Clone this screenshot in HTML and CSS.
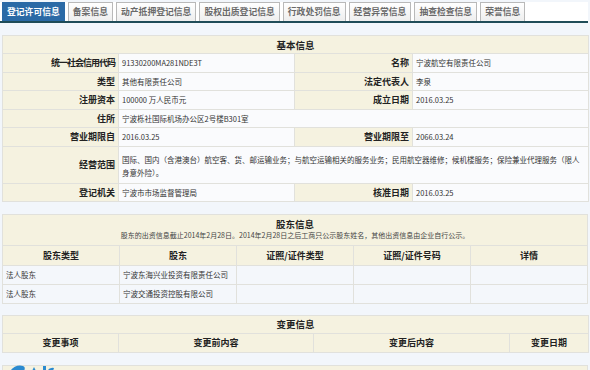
FILE: index.html
```html
<!DOCTYPE html>
<html lang="zh-CN">
<head>
    <meta charset="UTF-8">
    <title>企业信息公示</title>
    <link rel="stylesheet" href="styles.css">
</head>
<body>
    <div class="page">
        <ul class="tabs">
            <li class="tab active">登记许可信息</li>
            <li class="tab">备案信息</li>
            <li class="tab">动产抵押登记信息</li>
            <li class="tab">股权出质登记信息</li>
            <li class="tab">行政处罚信息</li>
            <li class="tab">经营异常信息</li>
            <li class="tab">抽查检查信息</li>
            <li class="tab">荣誉信息</li>
        </ul>

        <!-- 基本信息 -->
        <table class="grid">
            <colgroup>
                <col class="w-label"><col class="w-value"><col class="w-label2"><col class="w-value">
            </colgroup>
            <tr><th colspan="4" class="caption">基本信息</th></tr>
            <tr>
                <td class="label tight">统一社会信用代码</td><td class="value">91330200MA281NDE3T</td>
                <td class="label">名称</td><td class="value">宁波航空有限责任公司</td>
            </tr>
            <tr>
                <td class="label">类型</td><td class="value">其他有限责任公司</td>
                <td class="label">法定代表人</td><td class="value">李泉</td>
            </tr>
            <tr>
                <td class="label">注册资本</td><td class="value">100000 万人民币元</td>
                <td class="label">成立日期</td><td class="value">2016.03.25</td>
            </tr>
            <tr>
                <td class="label">住所</td><td class="value" colspan="3">宁波栎社国际机场办公区2号楼B301室</td>
            </tr>
            <tr>
                <td class="label">营业期限自</td><td class="value">2016.03.25</td>
                <td class="label">营业期限至</td><td class="value">2066.03.24</td>
            </tr>
            <tr>
                <td class="label">经营范围</td>
                <td class="value wrap" colspan="3">国际、国内（含港澳台）航空客、货、邮运输业务；与航空运输相关的服务业务；民用航空器维修；候机楼服务；保险兼业代理服务（限人<br>身意外险）。</td>
            </tr>
            <tr>
                <td class="label">登记机关</td><td class="value">宁波市市场监督管理局</td>
                <td class="label">核准日期</td><td class="value">2016.03.25</td>
            </tr>
        </table>

        <!-- 股东信息 -->
        <table class="grid list">
            <tr>
                <th colspan="5" class="caption double">
                    股东信息
                    <div class="note">股东的出资信息截止2014年2月28日。2014年2月28日之后工商只公示股东姓名，其他出资信息由企业自行公示。</div>
                </th>
            </tr>
            <tr class="head">
                <th>股东类型</th><th>股东</th><th>证照/证件类型</th><th>证照/证件号码</th><th>详情</th>
            </tr>
            <tr>
                <td>法人股东</td><td>宁波东海兴业投资有限责任公司</td><td></td><td></td><td></td>
            </tr>
            <tr>
                <td>法人股东</td><td>宁波交通投资控股有限公司</td><td></td><td></td><td></td>
            </tr>
        </table>

        <!-- 变更信息 -->
        <table class="grid changes">
            <colgroup>
                <col class="w-label"><col class="w-before"><col class="w-after"><col class="w-date">
            </colgroup>
            <tr><th colspan="4" class="caption">变更信息</th></tr>
            <tr class="head">
                <th>变更事项</th><th>变更前内容</th><th>变更后内容</th><th>变更日期</th>
            </tr>
        </table>

        <table class="grid">
            <tr><th class="caption">许可信息</th></tr>
        </table>

        <svg class="watermark" width="50" height="8" viewBox="0 0 50 8">
            <path d="M2 8 Q8 1 15 3 Q18 4 16 8 Z" fill="#2a8ad0"/>
            <path d="M24 8 L26 4 L28 8 Z" fill="#2a8ad0"/>
            <rect x="35" y="3" width="3" height="5" fill="#2a8ad0"/>
            <path d="M39 8 Q42 4 46 5 L45 8 Z" fill="#2a8ad0"/>
        </svg>
    </div>
</body>
</html>
```

FILE: styles.css
```css
html, body {
    margin: 0;
    overflow: hidden;
}

body {
    background: #f2f6fb;
    font-family: "Noto Sans CJK SC", "Noto Sans", sans-serif;
    color: #333;
}

.page {
    position: relative;
    width: 588px;
    padding-top: 2px;
}

/* tabs */
.tabs {
    list-style: none;
    margin: 0;
    padding: 0 0 0 2px;
    display: flex;
    gap: 3px;
    border-bottom: 2px solid #1f4c58;
    background: #fff;
}

.tab {
    height: 18px;
    line-height: 18px;
    padding: 0 4px;
    font-size: 8.8px;
    font-weight: bold;
    color: #6a6a6a;
    background: linear-gradient(#ffffff, #eeeeee);
    border: 1px solid #b9b9b9;
    border-bottom: none;
}

.tab.active {
    background: #2b6aa6;
    border-color: #2b6aa6;
    color: #fff;
}

/* tables */
.grid {
    width: 586px;
    margin: 12px 0 0 2px;
    border-collapse: collapse;
    table-layout: fixed;
    background: #f8fafd;
}

.grid td,
.grid th {
    border: 1px solid #e1e1dc;
    height: 17.5px;
    padding: 0 3px;
    font-size: 7.5px;
    overflow: hidden;
    white-space: nowrap;
}

.grid th {
    background: #f5f2e0;
    font-size: 9px;
    font-weight: bold;
    color: #222;
    text-align: center;
}

.grid .caption {
    font-size: 9.5px;
    height: 17px;
}

.caption.double {
    height: 30px;
    line-height: 11px;
}

.note {
    font-size: 7px;
    font-weight: normal;
    color: #444;
}

.w-label { width: 116px; }
.w-value { width: 176px; }
.w-label2 { width: 118px; }
.w-before { width: 195px; }
.w-after { width: 196px; }
.w-date { width: 79px; }

.grid .label {
    background: #f5f2e0;
    font-size: 9px;
    font-weight: bold;
    text-align: right;
    color: #222;
}

.grid .label.tight {
    letter-spacing: -1px;
}

.grid .value {
    background: #fafbfd;
}

.grid .wrap {
    white-space: normal;
    line-height: 13px;
    height: 34px;
    padding-top: 2px;
    padding-right: 6px;
}

.list td {
    height: 18px;
    background: #f4f7fb;
}

.list .head th {
    height: 18.5px;
}

.changes .head th {
    height: 18.5px;
}

.changes {
    margin-top: 11px;
}

.watermark {
    position: absolute;
    left: 8px;
    top: 363px;
}
```
